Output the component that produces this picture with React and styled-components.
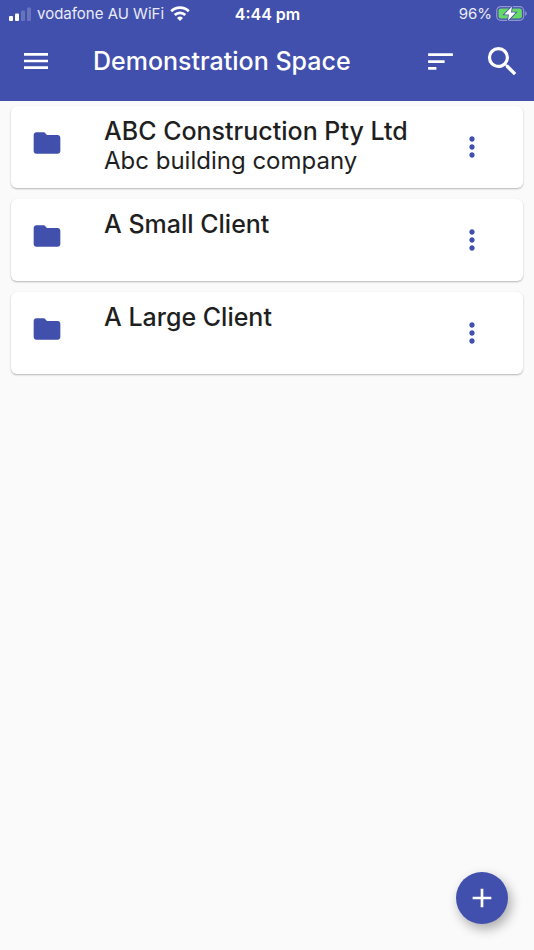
import React from "react";
import styled, { createGlobalStyle } from "styled-components";

const indigo = "#4250ad";

const GlobalStyle = createGlobalStyle`
  *, *::before, *::after { box-sizing: border-box; }
  body {
    margin: 0;
    background: #fafafa;
    color: #1f1f1f;
    font-family: Inter, "Liberation Sans", sans-serif;
  }
`;

const Header = styled.header`
  background: ${indigo};
  color: #fff;
`;

const StatusBar = styled.div`
  display: grid;
  grid-template-columns: 1fr auto 1fr;
  align-items: center;
  height: 28px;
  padding: 0 7px 0 8px;
  font-size: 15px;
  line-height: 20px;
`;

const StatusGroup = styled.div`
  display: flex;
  align-items: center;
  justify-content: ${(p) => (p.$end ? "flex-end" : "flex-start")};
  gap: ${(p) => (p.$end ? "4px" : "6px")};
  color: #e9ebf7;
  white-space: nowrap;
`;

const Clock = styled.time`
  font-size: 16px;
  font-weight: 600;
`;

const Toolbar = styled.div`
  display: flex;
  align-items: center;
  height: 73px;
  padding: 0 12px 7px 20px;
`;

const Title = styled.h1`
  flex: 1;
  min-width: 0;
  margin: 0 0 0 41px;
  font-size: 25px;
  line-height: 32px;
  font-weight: 500;
  white-space: nowrap;
`;

const IconButton = styled.button`
  display: flex;
  flex: none;
  margin: 0;
  padding: 0;
  border: 0;
  background: none;
  color: inherit;
  cursor: pointer;
`;

const Actions = styled.div`
  display: flex;
  align-items: center;
  gap: 26px;
`;

const Icon = styled.svg`
  display: block;
  flex: none;
  width: ${(p) => p.$size}px;
  height: ${(p) => p.$size}px;
  fill: currentColor;
`;

const List = styled.ul`
  display: flex;
  flex-direction: column;
  gap: 11px;
  margin: 0;
  padding: 5px 11px 96px;
  list-style: none;
`;

const Card = styled.li`
  display: flex;
  align-items: center;
  min-height: 82px;
  padding: 10px 35px 10px 20px;
  border-radius: 6px;
  background: #fff;
  box-shadow: 0 1px 2px rgba(0, 0, 0, 0.28);
`;

const Leading = styled.span`
  align-self: flex-start;
  padding-top: 11px;
  color: ${indigo};
`;

const CardText = styled.div`
  flex: 1;
  align-self: flex-start;
  min-width: 0;
  margin-left: 41px;
  font-size: 24px;
  line-height: 30px;
`;

const Name = styled.h2`
  margin: 0;
  font-size: 25px;
  line-height: 30px;
  font-weight: 500;
`;

const Description = styled.p`
  margin: 0;
`;

const MoreButton = styled(IconButton)`
  color: ${indigo};
`;

const AddButton = styled(IconButton)`
  position: fixed;
  right: 26px;
  bottom: 26px;
  align-items: center;
  justify-content: center;
  width: 52px;
  height: 52px;
  border-radius: 50%;
  background: ${indigo};
  color: #fff;
  box-shadow: 3px 5px 12px rgba(0, 0, 0, 0.32);
`;

const folders = [
  { name: "ABC Construction Pty Ltd", description: "Abc building company" },
  { name: "A Small Client" },
  { name: "A Large Client" },
];

function MaterialIcon({ size, d }) {
  return (
    <Icon $size={size} viewBox="0 0 24 24" aria-hidden="true">
      <path d={d} />
    </Icon>
  );
}

function SignalIcon() {
  return (
    <svg width="23" height="16" viewBox="0 0 23 16" fill="#fff" aria-hidden="true">
      <rect x="1" y="10" width="4" height="5" rx="1" />
      <rect x="7" y="7.500" width="4" height="7.500" rx="1" />
      <rect x="13" y="4.500" width="4" height="10.500" rx="1" opacity="0.2" />
      <rect x="19" y="1.500" width="4" height="13.500" rx="1" opacity="0.2" />
    </svg>
  );
}

function WifiIcon() {
  return (
    <svg width="20" height="16" viewBox="0 0 20 16" fill="none" stroke="#fff" strokeWidth="2.700" aria-hidden="true">
      <path d="M1.200 5.200a12.600 12.600 0 0 1 17.600 0" />
      <path d="M4.700 9a7.600 7.600 0 0 1 10.600 0" />
      <path d="M10 15l-3-3a4.300 4.300 0 0 1 6 0z" fill="#fff" stroke="none" />
    </svg>
  );
}

function BatteryIcon() {
  return (
    <svg width="31" height="16" viewBox="0 0 31 16" aria-hidden="true">
      <rect x="0.700" y="0.700" width="27" height="13.600" rx="4" fill="none" stroke="#8f97d0" strokeWidth="1.200" />
      <path d="M29.200 5.200c2 .7 2 3.900 0 4.600z" fill="#8f97d0" />
      <rect x="2.500" y="2.500" width="23.400" height="10" rx="2.300" fill="#67d866" />
      <path d="M16 .5L8.300 8.500h4.600l-1 6.200L19.700 6.500h-4.700z" fill="#fff" stroke={indigo} strokeWidth="1.600" paintOrder="stroke" />
    </svg>
  );
}

export default function App() {
  return (
    <>
      <GlobalStyle />
      <Header>
        <StatusBar>
          <StatusGroup>
            <SignalIcon />
            <span>vodafone AU WiFi</span>
            <WifiIcon />
          </StatusGroup>
          <Clock>4:44 pm</Clock>
          <StatusGroup $end>
            <span>96%</span>
            <BatteryIcon />
          </StatusGroup>
        </StatusBar>
        <Toolbar>
          <IconButton type="button" aria-label="Menu">
            <MaterialIcon size={32} d="M3 18h18v-2H3v2zm0-5h18v-2H3v2zm0-7v2h18V6H3z" />
          </IconButton>
          <Title>Demonstration Space</Title>
          <Actions>
            <IconButton type="button" aria-label="Sort">
              <MaterialIcon size={33} d="M3 18h6v-2H3v2zM3 6v2h18V6H3zm0 7h12v-2H3v2z" />
            </IconButton>
            <IconButton type="button" aria-label="Search">
              <MaterialIcon
                size={39}
                d="M15.500 14h-.79l-.28-.27A6.471 6.471 0 0 0 16 9.500 6.500 6.500 0 1 0 9.500 16c1.610 0 3.090-.59 4.230-1.570l.27.28v.79l5 4.990L20.490 19l-4.990-5zm-6 0C7.010 14 5 11.990 5 9.500S7.010 5 9.500 5 14 7.010 14 9.500 11.990 14 9.500 14z"
              />
            </IconButton>
          </Actions>
        </Toolbar>
      </Header>
      <main>
        <List>
          {folders.map(({ name, description }) => (
            <Card key={name}>
              <Leading>
                <MaterialIcon
                  size={32}
                  d="M10 4H4c-1.100 0-1.990.9-1.990 2L2 18c0 1.100.9 2 2 2h16c1.100 0 2-.9 2-2V8c0-1.100-.9-2-2-2h-8l-2-2z"
                />
              </Leading>
              <CardText>
                <Name>{name}</Name>
                {description && <Description>{description}</Description>}
              </CardText>
              <MoreButton type="button" aria-label={`More options for ${name}`}>
                <MaterialIcon
                  size={32}
                  d="M12 8c1.100 0 2-.9 2-2s-.9-2-2-2-2 .9-2 2 .9 2 2 2zm0 2c-1.100 0-2 .9-2 2s.9 2 2 2 2-.9 2-2-.9-2-2-2zm0 6c-1.100 0-2 .9-2 2s.9 2 2 2 2-.9 2-2-.9-2-2-2z"
                />
              </MoreButton>
            </Card>
          ))}
        </List>
      </main>
      <AddButton type="button" aria-label="Add">
        <MaterialIcon size={32} d="M19 13h-6v6h-2v-6H5v-2h6V5h2v6h6v2z" />
      </AddButton>
    </>
  );
}
